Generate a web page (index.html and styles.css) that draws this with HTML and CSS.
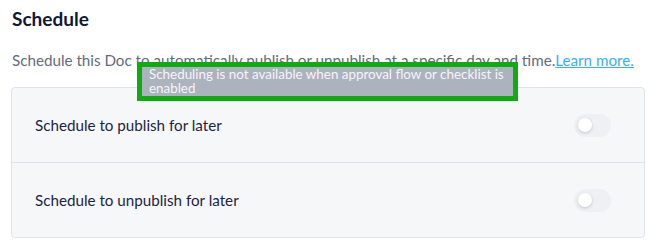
FILE: index.html
```html
<!DOCTYPE html>
<html>
<head>
<meta charset="utf-8">
<link rel="stylesheet" href="styles.css">
</head>
<body>
<div class="page">
  <h2 class="title">Schedule</h2>
  <div class="desc-wrap">
    <p class="desc">Schedule this Doc to automatically publish or unpublish at a specific day and time.<a class="link" href="#">Learn more.</a></p>
    <div class="tooltip"><div class="tooltip-inner">Scheduling is not available when approval flow or checklist is enabled</div></div>
  </div>
  <div class="card">
    <div class="row">
      <span class="row-label">Schedule to publish for later</span>
      <span class="toggle"><span class="knob"></span></span>
    </div>
    <div class="row">
      <span class="row-label">Schedule to unpublish for later</span>
      <span class="toggle"><span class="knob"></span></span>
    </div>
  </div>
</div>
</body>
</html>
```
FILE: styles.css
```css
html, body {
  margin: 0;
  padding: 0;
  background: #ffffff;
}
body {
  font-family: "Lato", "Liberation Sans", sans-serif;
}
.page {
  padding: 7px 25px 0 11px;
}
.title {
  margin: 0 0 0 1px;
  font-size: 19px;
  font-weight: 700;
  line-height: 24px;
  color: #0f1836;
}
.desc-wrap {
  position: relative;
  margin-top: 20px;
}
.desc {
  margin: 0 0 0 1px;
  font-size: 15.2px;
  line-height: 18px;
  color: #636b7e;
  white-space: nowrap;
}
.link {
  color: #3aaef5;
  text-decoration: underline;
}
.tooltip {
  position: absolute;
  left: 126px;
  top: 11px;
  width: 371px;
  border: 5px solid #10ab10;
  background: #adb2bf;
}
.tooltip-inner {
  height: 29px;
  padding: 0 6px 0 7px;
  font-size: 13.4px;
  line-height: 14px;
  color: #f4f5f8;
  white-space: normal;
}
.card {
  margin-top: 18px;
  border: 1px solid #e1e3e8;
  border-radius: 4px;
  background: #f6f7f9;
}
.row {
  display: flex;
  align-items: center;
  justify-content: space-between;
  height: 74px;
  padding: 0 33px 0 23px;
}
.row + .row {
  border-top: 1px solid #e1e3e8;
}
.row-label {
  font-size: 15.2px;
  color: #1b2444;
}
.toggle {
  position: relative;
  width: 37px;
  height: 23px;
  border-radius: 12px;
  background: #eff0f3;
}
.knob {
  position: absolute;
  left: 4px;
  top: 4px;
  width: 14px;
  height: 14px;
  border-radius: 50%;
  background: #ffffff;
  box-shadow: 0 1px 3px rgba(60, 70, 100, 0.25);
}
```
